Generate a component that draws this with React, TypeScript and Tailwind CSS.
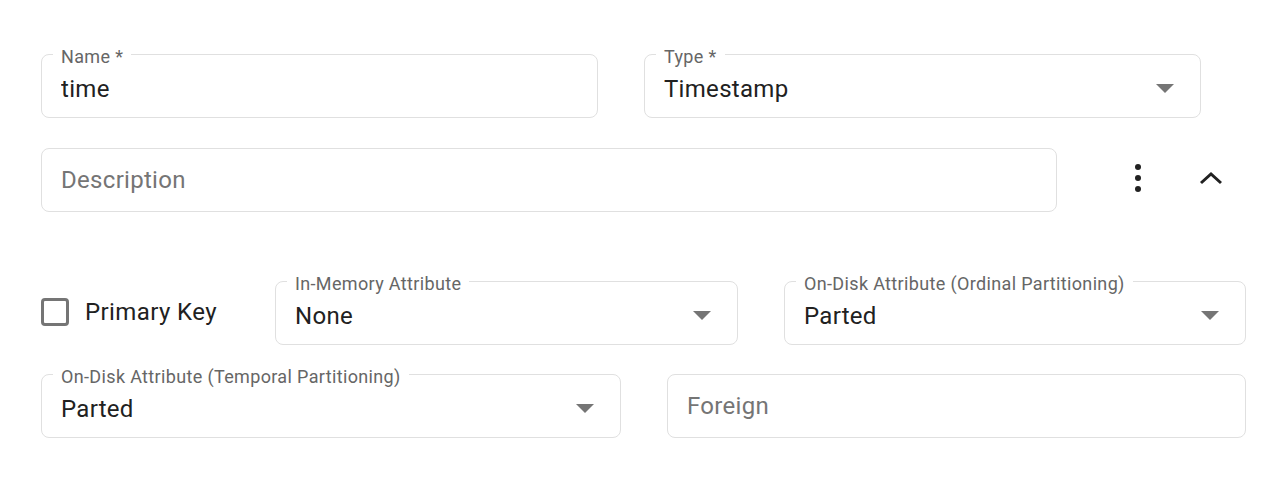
import { ReactNode } from 'react'

function Caret() {
  return (
    <svg width="18" height="9" viewBox="0 0 18 9" className="mt-[4px] shrink-0">
      <path d="M0 0 L18 0 L9 9 Z" fill="#757575" />
    </svg>
  )
}

interface FieldProps {
  label?: string
  value?: string
  placeholder?: string
  select?: boolean
  className?: string
}

function Field({ label, value, placeholder, select, className = '' }: FieldProps) {
  return (
    <div className={`relative flex h-[64px] items-center rounded-lg border border-[#e0e0e0] pl-[19px] pr-[26px] ${className}`}>
      {label && (
        <span className="absolute left-[11px] top-[-8px] bg-white px-[8px] text-[18px] leading-[20px] tracking-[0.35px] text-[#666666]">
          {label}
        </span>
      )}
      <span
        className={`flex-1 truncate text-[24px] leading-[28px] tracking-[0.3px] ${value ? 'pt-[5px] text-[#212121]' : 'pb-[1px] text-[#757575]'}`}
      >
        {value ?? placeholder}
      </span>
      {select && <Caret />}
    </div>
  )
}

function Row({ children, className = '' }: { children: ReactNode; className?: string }) {
  return <div className={`flex items-center ${className}`}>{children}</div>
}

export default function App() {
  return (
    <div
      className="min-h-[490px] bg-white pl-[41px] pt-[54px]"
      style={{ fontFamily: 'Roboto, "Noto Sans", sans-serif' }}
    >
      <Row className="gap-[46px]">
        <Field label="Name *" value="time" className="w-[557px]" />
        <Field label="Type *" value="Timestamp" select className="w-[557px]" />
      </Row>

      <Row className="mt-[30px]">
        <Field placeholder="Description" className="w-[1016px]" />
        <button className="mb-[4px] ml-[69px] flex h-[40px] w-[24px] flex-col items-center justify-center gap-[5px]">
          <span className="h-[6px] w-[6px] rounded-full bg-[#212121]" />
          <span className="h-[6px] w-[6px] rounded-full bg-[#212121]" />
          <span className="h-[6px] w-[6px] rounded-full bg-[#212121]" />
        </button>
        <button className="mb-[5px] ml-[46px] flex h-[40px] w-[30px] items-center justify-center">
          <svg width="24" height="16" viewBox="0 0 24 16">
            <path d="M2 13 L12 4 L22 13" fill="none" stroke="#212121" strokeWidth="3" />
          </svg>
        </button>
      </Row>

      <Row className="mt-[69px]">
        <label className="mb-[3px] flex w-[234px] items-center">
          <span className="h-[28px] w-[28px] rounded-[4px] border-[3px] border-[#757575]" />
          <span className="ml-[16px] text-[24px] leading-[28px] tracking-[0.4px] text-[#212121]">Primary Key</span>
        </label>
        <Field label="In-Memory Attribute" value="None" select className="w-[463px]" />
        <Field
          label="On-Disk Attribute (Ordinal Partitioning)"
          value="Parted"
          select
          className="ml-[46px] w-[462px]"
        />
      </Row>

      <Row className="mt-[29px] gap-[46px]">
        <Field label="On-Disk Attribute (Temporal Partitioning)" value="Parted" select className="w-[580px]" />
        <Field placeholder="Foreign" className="w-[579px]" />
      </Row>
    </div>
  )
}
